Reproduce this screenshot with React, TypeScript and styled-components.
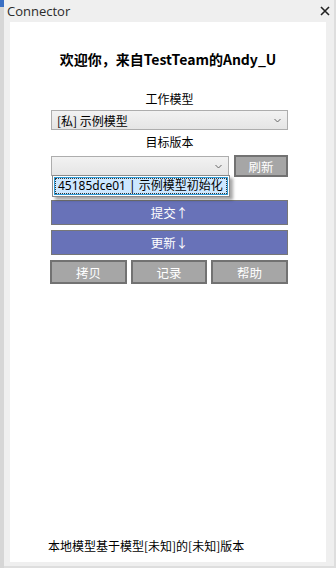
import React from "react";
import styled, { createGlobalStyle } from "styled-components";

const GlobalStyle = createGlobalStyle`
    html, body {
        margin: 0;
        padding: 0;
        background: #dedede;
        font-family: "Noto Sans", "Noto Sans CJK SC", sans-serif;
    }
`;

const SScreen = styled.div`
    display: flex;
    width: 336px;
    height: 568px;
    overflow: hidden;
`;

const SEdge = styled.div`
    width: 4px;
    background: linear-gradient(#3a6fc4 0, #3a6fc4 7px, #d6d6d6 7px);
`;

const SWindow = styled.div`
    width: 330px;
    height: 566px;
    background: #efefef;
    display: flex;
    flex-direction: column;
`;

const STitleBar = styled.div`
    height: 22px;
    display: flex;
    align-items: center;
    justify-content: space-between;
    padding: 0 4px 0 3px;
    font-family: "Open Sans", "Noto Sans", sans-serif;
    font-size: 13px;
    color: #2b2b2b;
`;

const SClient = styled.div`
    margin: 0 8px 0 6px;
    height: 540px;
    background: #ffffff;
    display: flex;
    flex-direction: column;
    font-family: "Noto Sans CJK SC", "Noto Sans", sans-serif;
`;

const SHeading = styled.div`
    margin-top: 28px;
    height: 18px;
    line-height: 18px;
    text-align: center;
    font-size: 14px;
    font-weight: 700;
    color: #000;
`;

const SForm = styled.div`
    margin: 23px 0 0 41px;
    width: 237px;
    display: flex;
    flex-direction: column;
`;

const SLabel = styled.div<{ top: number }>`
    margin-top: ${props => props.top}px;
    height: 16px;
    line-height: 16px;
    text-align: center;
    font-size: 12px;
    color: #000;
`;

const SSelect = styled.div<{ width: string }>`
    position: relative;
    box-sizing: border-box;
    width: ${props => props.width};
    height: 20px;
    border: 1px solid #adadad;
    background: linear-gradient(#f2f2f2, #e5e5e5);
    display: flex;
    align-items: center;
    padding: 0 6px 0 5px;
    font-size: 12px;
    color: #000;
`;

const SValue = styled.span`
    flex: 1;
`;

const SPickRow = styled.div`
    margin-top: 5px;
    display: flex;
    align-items: center;
    justify-content: space-between;
`;

const SList = styled.div`
    position: absolute;
    left: 0;
    top: 100%;
    width: 178px;
    box-sizing: border-box;
    border: 1px solid #8a8a8a;
    background: #fff;
    padding: 1px;
    box-shadow: 3px 3px 3px rgba(0, 0, 0, 0.35);
    z-index: 2;
`;

const SItem = styled.div`
    height: 18px;
    box-sizing: border-box;
    border: 1px solid #2e9bd6;
    background: #cde8ff;
    display: flex;
    align-items: center;
`;

const SItemText = styled.span`
    flex: 1;
    height: 14px;
    line-height: 14px;
    margin: 0 1px;
    padding-left: 2px;
    outline: 1px dotted #333;
    font-size: 12px;
    font-family: "Noto Sans", "Noto Sans CJK SC", sans-serif;
    white-space: nowrap;
    color: #000;
`;

const SButton = styled.div<{ tone: "blue" | "grey"; h: number; w?: string }>`
    box-sizing: border-box;
    width: ${props => props.w || "100%"};
    height: ${props => props.h}px;
    background: ${props => (props.tone === "blue" ? "#6872b8" : "#a6a6a6")};
    border: ${props => (props.tone === "blue" ? "1px solid #777" : "2px solid #727272")};
    color: #fff;
    font-size: 12.5px;
    display: flex;
    align-items: center;
    justify-content: center;
`;

const SBlockGap = styled.div<{ h: number }>`
    height: ${props => props.h}px;
`;

const SToolRow = styled.div`
    display: grid;
    grid-template-columns: 77px 76px 77px;
    justify-content: space-between;
    margin-left: -1px;
`;

const SFooter = styled.div`
    margin: auto 0 8px 38px;
    font-size: 12px;
    color: #000;
`;

const Chevron = () => (
    <svg width="7" height="5" viewBox="0 0 7 5">
        <path d="M0.5 1 L3.5 4 L6.5 1" fill="none" stroke="#666" strokeWidth="1" />
    </svg>
);

const CloseIcon = () => (
    <svg width="10" height="10" viewBox="0 0 10 10">
        <path d="M1 1 L9 9 M9 1 L1 9" stroke="#222" strokeWidth="1.6" />
    </svg>
);

export default function App() {
    return (
        <SScreen>
            <GlobalStyle />
            <SEdge />
            <SWindow>
                <STitleBar>
                    <span>Connector</span>
                    <CloseIcon />
                </STitleBar>
                <SClient>
                    <SHeading>欢迎你，来自TestTeam的Andy_U</SHeading>
                    <SForm>
                        <SLabel top={0}>工作模型</SLabel>
                        <SSelect width="237px" style={{ marginTop: 3 }}>
                            <SValue>[私] 示例模型</SValue>
                            <Chevron />
                        </SSelect>
                        <SLabel top={4}>目标版本</SLabel>
                        <SPickRow>
                            <SSelect width="178px">
                                <SValue />
                                <Chevron />
                                <SList>
                                    <SItem>
                                        <SItemText>45185dce01 | 示例模型初始化</SItemText>
                                    </SItem>
                                </SList>
                            </SSelect>
                            <SButton tone="grey" h={22} w="54px">刷新</SButton>
                        </SPickRow>
                        <SBlockGap h={23} />
                        <SButton tone="blue" h={25}>提交↑</SButton>
                        <SBlockGap h={5} />
                        <SButton tone="blue" h={25}>更新↓</SButton>
                        <SBlockGap h={5} />
                        <SToolRow>
                            <SButton tone="grey" h={24}>拷贝</SButton>
                            <SButton tone="grey" h={24}>记录</SButton>
                            <SButton tone="grey" h={24}>帮助</SButton>
                        </SToolRow>
                    </SForm>
                    <SFooter>本地模型基于模型[未知]的[未知]版本</SFooter>
                </SClient>
            </SWindow>
        </SScreen>
    );
}
